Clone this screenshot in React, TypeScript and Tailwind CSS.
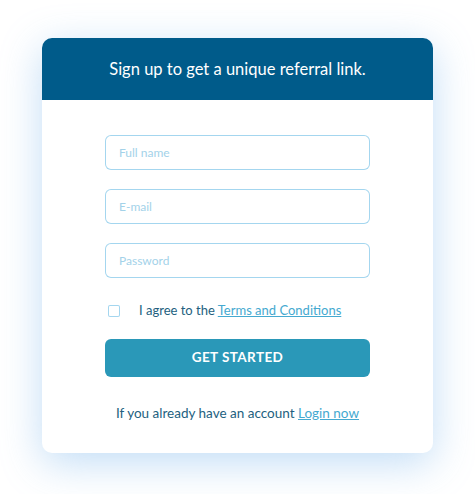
import React, { useState } from 'react';

export default function App() {
  const [agreed, setAgreed] = useState(false);

  const field =
    'h-[35px] w-full rounded-[6px] border-0 bg-white px-[14px] text-[12px] text-[#1f5a7a] outline-none shadow-[inset_0_0_0_1px_#a4d6ef] placeholder:text-[#a3d2e9]';

  return (
    <div className="min-h-[494px] w-full bg-white pt-[38px] font-['Lato',sans-serif]">
      <div className="mx-auto w-[391px] overflow-hidden rounded-[10px] bg-white shadow-[0_10px_40px_rgba(120,180,235,0.45)]">
        <div className="flex h-[62px] items-center justify-center bg-[#005b8a]">
          <h2 className="text-[16.5px] text-white">Sign up to get a unique referral link.</h2>
        </div>

        <div className="flex flex-col px-[63px] pt-[35px] pb-[30px]">
          <input type="text" placeholder="Full name" className={field} />
          <div className="mt-[19px]">
            <input type="email" placeholder="E-mail" className={field} />
          </div>
          <div className="mt-[19px]">
            <input type="password" placeholder="Password" className={field} />
          </div>

          <label className="mt-[23px] flex cursor-pointer items-center text-[13px] text-[#235f80]">
            <input
              type="checkbox"
              checked={agreed}
              onChange={e => setAgreed(e.target.checked)}
              className="ml-[3px] h-[12px] w-[12px] cursor-pointer appearance-none rounded-[2px] bg-white shadow-[inset_0_0_0_1px_#a4d6ef] checked:bg-[#2a98b8]"
            />
            <span className="ml-[19px]">
              I agree to the{' '}
              <a href="#" className="text-[#45a9d0] underline">Terms and Conditions</a>
            </span>
          </label>

          <button className="mt-[18px] h-[38px] w-full rounded-[6px] bg-[#2a98b8] text-[13.5px] font-bold tracking-[0.03em] text-white">
            GET STARTED
          </button>

          <p className="mt-[26px] text-center text-[13.5px] text-[#235f80]">
            If you already have an account{' '}
            <a href="#" className="text-[#45a9d0] underline">Login now </a>
          </p>
        </div>
      </div>
    </div>
  );
}
